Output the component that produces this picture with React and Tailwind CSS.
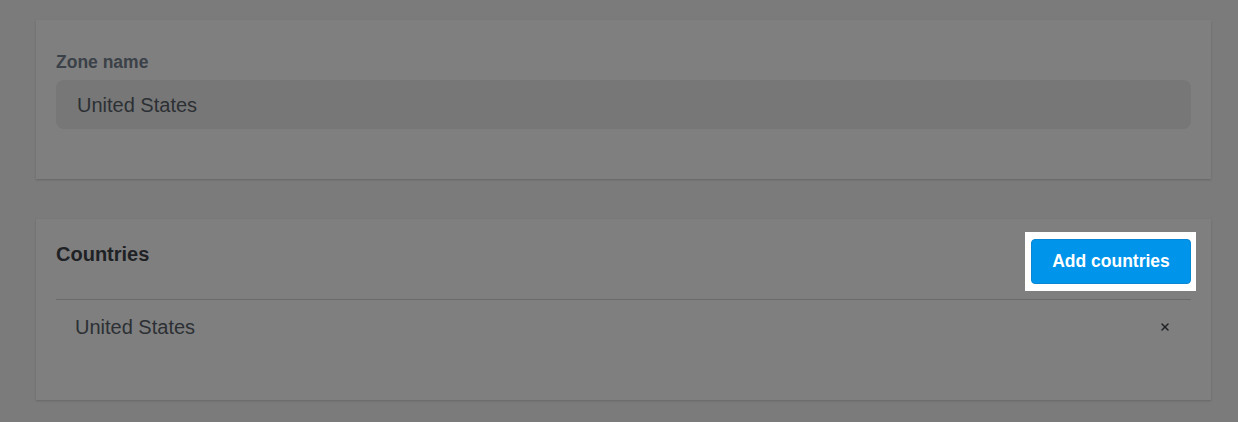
import { X } from "lucide-react";

export default function App() {
  return (
    <div
      className="min-h-[422px] w-full bg-[#7b7b7b] pt-5 pl-9 pr-[27px] pb-5"
      style={{ fontFamily: '"Liberation Sans", Arial, sans-serif' }}
    >
      {/* zone name card */}
      <div className="bg-[#7f7f7f] shadow-[0_1px_2px_rgba(0,0,0,0.18)] px-5 pt-[32px] pb-[50px]">
        <label className="block text-[17.5px] leading-5 font-bold text-[#3b4148] mb-2">
          Zone name
        </label>
        <div className="h-[49px] rounded-lg bg-[#777777] flex items-center px-[21px] text-[20px] text-[#2c3034]">
          United States
        </div>
      </div>

      {/* countries card */}
      <div className="mt-10 bg-[#7f7f7f] shadow-[0_1px_2px_rgba(0,0,0,0.18)] px-5 pt-5 pb-[46px]">
        <div className="flex justify-between items-start pb-[15px] border-b border-[#6a6a6a]">
          <h2 className="mt-[3px] text-[20px] leading-6 font-bold text-[#1f2225]">Countries</h2>
          <div className="relative">
            <div className="absolute -top-[7px] -bottom-[7px] -left-[6px] -right-[5px] bg-white" />
            <button className="relative h-[45px] w-[160px] rounded bg-[#0094ea] border border-[#0a87d4] text-white font-bold text-[17.5px]">
              Add countries
            </button>
          </div>
        </div>
        <div className="h-[54px] flex items-center justify-between pl-[19px] pr-[20px]">
          <span className="text-[20px] text-[#2c3034]">United States</span>
          <X className="w-3 h-3 text-[#1f2225]" strokeWidth={3} />
        </div>
      </div>
    </div>
  );
}
